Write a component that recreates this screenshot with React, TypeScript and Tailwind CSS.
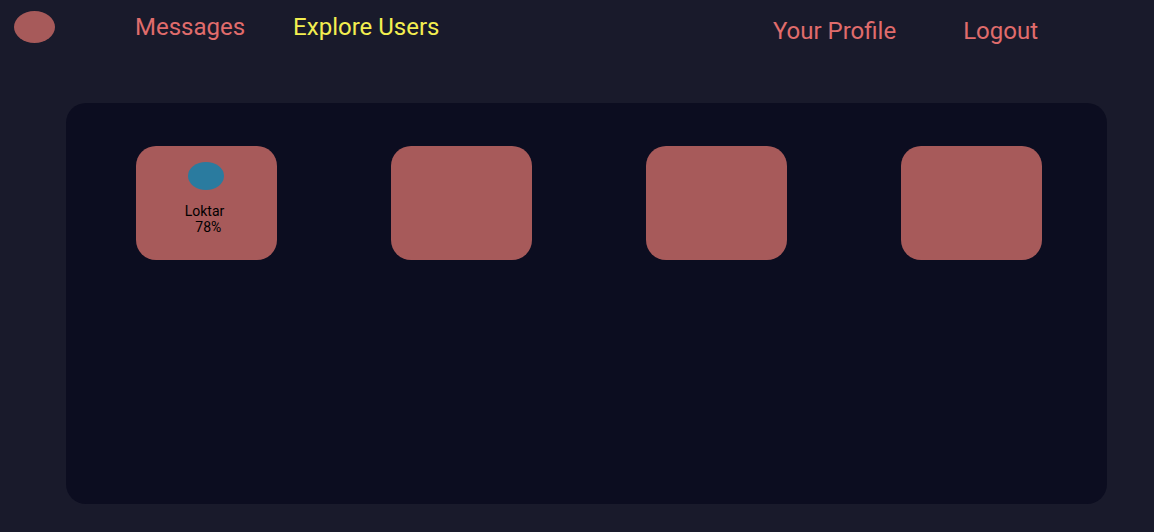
const cards = [
  { id: 1, name: "Loktar", match: "78%" },
  { id: 2 },
  { id: 3 },
  { id: 4 },
];

export default function App() {
  return (
    <div className="flex min-h-screen flex-col bg-[#191a2b] pb-7 font-['Roboto',sans-serif]">
      <header className="flex h-[103px] items-start pl-3.5 pr-29 text-2xl leading-7 text-[#e06c6c]">
        <a href="#home" aria-label="Home" className="mt-[11px] mr-20 h-8 w-[41px] rounded-[50%] bg-[#a75a5a]" />
        <nav className="mt-[13px] flex gap-12">
          <a href="#messages">Messages</a>
          <a href="#explore" className="text-[#f3ee50]">Explore Users</a>
        </nav>
        <nav className="mt-[17px] ml-auto flex gap-[67px]">
          <a href="#profile">Your Profile</a>
          <a href="#logout">Logout</a>
        </nav>
      </header>
      <main className="mr-[47px] ml-[66px] flex-1 rounded-[20px] bg-[#0c0d20] pt-[43px] pr-[65px] pb-10 pl-[70px]">
        <ul className="flex justify-between">
          {cards.map((card) => (
            <li key={card.id} className="flex h-[114px] w-[141px] flex-col items-center rounded-[20px] bg-[#a75a5a] pt-4 pr-px text-sm leading-4 text-black">
              {card.name && (
                <>
                  <span className="h-7 w-9 rounded-[50%] bg-[#2a7b9f]" />
                  <p className="mt-[13px] pr-[3px] text-right">
                    {card.name}
                    <br />
                    <span className="pr-[3px]">{card.match}</span>
                  </p>
                </>
              )}
            </li>
          ))}
        </ul>
      </main>
    </div>
  );
}
